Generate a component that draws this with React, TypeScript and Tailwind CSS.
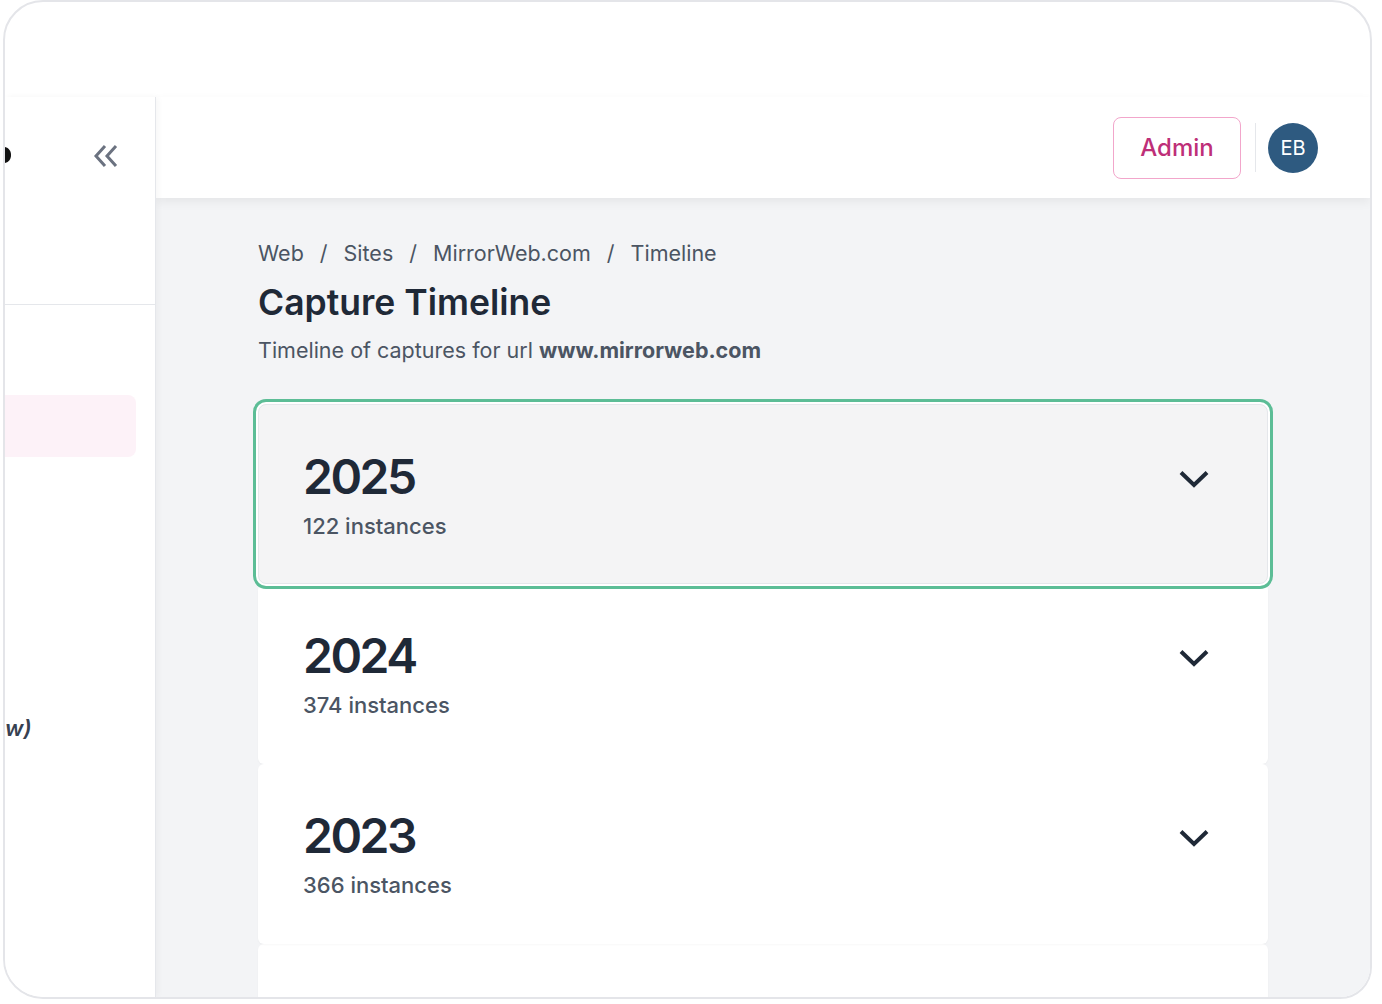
import React from 'react';

interface YearRow {
  year: string;
  count: number;
}

const years: YearRow[] = [
  { year: '2025', count: 122 },
  { year: '2024', count: 374 },
  { year: '2023', count: 366 },
];

const Chevron = () => (
  <svg width="32" height="20" viewBox="0 0 32 20" fill="none" className="shrink-0">
    <path d="M3 3.5 L16 16 L29 3.5" stroke="#1f2937" strokeWidth="4" strokeLinejoin="miter" />
  </svg>
);

const YearCard: React.FC<{ row: YearRow; active?: boolean }> = ({ row, active }) => (
  <div
    className={
      active
        ? 'relative z-10 flex h-[180px] items-start justify-between rounded-lg border border-[#e5e7eb] bg-[#f4f4f5] pl-[44px] pr-[57px] ring-[3px] ring-[#5cbd96] ring-offset-2'
        : 'relative flex h-[180px] items-start justify-between rounded-md bg-white pl-[45px] pr-[58px] shadow-[0_1px_2px_rgba(0,0,0,0.03)]'
    }
  >
    <div className="flex flex-col pt-[48px]">
      <span className="text-[48px] font-semibold leading-none tracking-[-2.5px] text-[#1f2937]">{row.year}</span>
      <span className="mt-[11px] text-[22px] font-medium leading-[28px] text-[#4b5563]">{row.count} instances</span>
    </div>
    <div className="mt-[64px]">
      <Chevron />
    </div>
  </div>
);

export default function App() {
  return (
    <div className="min-h-screen bg-white font-['Inter','Noto_Sans',sans-serif]">
      <div className="ml-[3px] flex h-[999px] w-[1369px] flex-col overflow-hidden rounded-[40px] rounded-br-[32px] border-2 border-[#e4e5e9] bg-white">
        {/* bezel area */}
        <div className="h-[95px] shrink-0" />

        <div className="flex min-h-0 flex-1">
          {/* sidebar, cut off */}
          <aside className="relative z-20 flex w-[151px] shrink-0 flex-col border-r border-[#e5e7eb] bg-white shadow-[2px_0_6px_rgba(0,0,0,0.04)]">
            <div className="flex h-[208px] shrink-0 items-start justify-between border-b border-[#e5e7eb] pr-[36px] pt-[47px]">
              <svg width="6" height="16" viewBox="0 0 6 16" className="mt-[3px]">
                <path d="M0 0 C4 1 6 4 6 8 C6 12 4 15 0 16 Z" fill="#111" />
              </svg>
              <svg width="26" height="24" viewBox="0 0 26 24" fill="none">
                <path d="M12 2 L3 12 L12 22" stroke="#6b7280" strokeWidth="3" />
                <path d="M23 2 L14 12 L23 22" stroke="#6b7280" strokeWidth="3" />
              </svg>
            </div>
            <div className="flex flex-col pr-[19px] pt-[90px]">
              <div className="h-[62px] rounded-r-lg bg-[#fdf2f8]" />
              <div className="mt-[256px] text-[22px] font-semibold italic leading-[30px] text-[#374151]">w)</div>
            </div>
          </aside>

          {/* main */}
          <main className="flex min-w-0 flex-1 flex-col bg-[#f3f4f6]">
            <header className="relative z-10 flex h-[101px] shrink-0 items-center justify-end bg-white pr-[52px] shadow-[0_4px_10px_rgba(0,0,0,0.06)]">
              <button
                type="button"
                className="h-[62px] w-[128px] rounded-lg border-[1.5px] border-[#f2a6cb] bg-white text-[24px] font-medium text-[#be2f78]"
              >
                Admin
              </button>
              <div className="ml-[14px] h-[49px] w-px bg-[#e5e7eb]" />
              <div className="ml-[12px] flex h-[50px] w-[50px] items-center justify-center rounded-full bg-[#2e5a80] text-[20px] text-white">
                EB
              </div>
            </header>

            <div className="flex flex-col px-[102px] pt-[39px]">
              <nav className="flex items-center gap-[16px] text-[21.5px] leading-[32px] text-[#4b5563]">
                <span>Web</span>
                <span>/</span>
                <span>Sites</span>
                <span>/</span>
                <span>MirrorWeb.com</span>
                <span>/</span>
                <span>Timeline</span>
              </nav>
              <h1 className="mt-[14px] text-[35.5px] font-semibold leading-[40px] text-[#1f2937]">Capture Timeline</h1>
              <p className="mt-[11px] text-[21.5px] leading-[32px] text-[#4b5563]">
                Timeline of captures for url <span className="font-bold">www.mirrorweb.com</span>
              </p>

              <div className="mt-[38px] flex flex-col">
                {years.map((row, i) => (
                  <YearCard key={row.year} row={row} active={i === 0} />
                ))}
                <div className="h-[180px] rounded-md bg-white shadow-[0_1px_2px_rgba(0,0,0,0.03)]" />
              </div>
            </div>
          </main>
        </div>
      </div>
    </div>
  );
}
